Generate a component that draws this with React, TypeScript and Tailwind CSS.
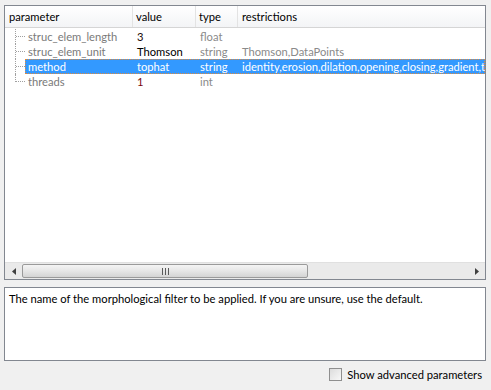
import React from 'react';

const rows = [
  { name: 'struc_elem_length', value: '3', type: 'float', restr: '', valueColor: 'text-[#1a0a0a]' },
  { name: 'struc_elem_unit', value: 'Thomson', type: 'string', restr: 'Thomson,DataPoints', valueColor: 'text-black' },
  { name: 'method', value: 'tophat', type: 'string', restr: 'identity,erosion,dilation,opening,closing,gradient,tophat,bothat', valueColor: 'text-white', selected: true },
  { name: 'threads', value: '1', type: 'int', restr: '', valueColor: 'text-[#7a0a0a]' },
];

export default function App() {
  return (
    <div
      className="flex flex-col w-[491px] h-[390px] bg-[#f0f0f0] pl-1 pr-[5px] pt-[5px] overflow-hidden text-[11.2px] leading-none"
      style={{ fontFamily: '"Segoe UI", Lato, sans-serif' }}
    >
      {/* Parameter tree */}
      <div className="flex flex-col h-[275px] border border-[#828790] bg-white">
        {/* Header */}
        <div className="flex h-[22px] bg-gradient-to-b from-white to-[#f3f4f6] border-b border-[#d5d5d5] text-black">
          <div className="w-[128px] pl-1 flex items-center border-r border-[#e3e3e3]">parameter</div>
          <div className="w-[63px] pl-[3px] flex items-center border-r border-[#e3e3e3]">value</div>
          <div className="w-[42px] pl-[3px] flex items-center border-r border-[#e3e3e3]">type</div>
          <div className="flex-1 pl-[4px] flex items-center">restrictions</div>
        </div>

        {/* Rows */}
        <div className="flex flex-col pt-px">
          {rows.map((r, i) => (
            <div key={r.name} className="flex h-[15px] items-stretch">
              {/* tree lines */}
              <div className="relative w-[20px] shrink-0">
                <div
                  className={`absolute left-[10px] top-0 border-l border-dotted border-[#a0a0a0] ${i === rows.length - 1 ? 'h-[8px]' : 'h-full'}`}
                />
                <div className="absolute left-[11px] top-[7px] w-[9px] border-t border-dotted border-[#a0a0a0]" />
              </div>
              <div
                className={`flex flex-1 min-w-0 items-center whitespace-nowrap overflow-hidden ${
                  r.selected ? 'bg-[#3399ff] outline outline-1 outline-dotted outline-[#e08a3c] -outline-offset-1' : ''
                }`}
              >
                <div className={`w-[112px] shrink-0 pl-[3px] ${r.selected ? 'text-white' : 'text-[#7a7a7a]'}`}>{r.name}</div>
                <div className={`w-[63px] shrink-0 ${r.valueColor}`}>{r.value}</div>
                <div className={`w-[42px] shrink-0 ${r.selected ? 'text-white' : 'text-[#8a8a8a]'}`}>{r.type}</div>
                <div className={`shrink-0 ${r.selected ? 'text-white' : 'text-[#8a8a8a]'}`}>{r.restr}</div>
              </div>
            </div>
          ))}
        </div>

        <div className="flex-1" />

        {/* Horizontal scrollbar */}
        <div className="flex h-[17px] bg-[#eaeaea] border-t border-[#e0e0e0]">
          <div className="w-[17px] flex items-center justify-center">
            <svg width="4" height="7" viewBox="0 0 4 7">
              <path d="M4 0 L0 3.5 L4 7 Z" fill="#404040" />
            </svg>
          </div>
          <div className="w-[286px] my-px rounded-[2px] border border-[#9a9a9a] bg-gradient-to-b from-[#f4f4f4] via-[#e6e6e6] to-[#d4d4d4] flex items-center justify-center gap-[2px]">
            <span className="w-px h-[7px] bg-[#5a5a5a]" />
            <span className="w-px h-[7px] bg-[#5a5a5a]" />
            <span className="w-px h-[7px] bg-[#5a5a5a]" />
          </div>
          <div className="flex-1" />
          <div className="w-[17px] flex items-center justify-center">
            <svg width="4" height="7" viewBox="0 0 4 7">
              <path d="M0 0 L4 3.5 L0 7 Z" fill="#404040" />
            </svg>
          </div>
        </div>
      </div>

      {/* Description */}
      <div className="mt-[7px] h-[74px] border border-[#828790] bg-white px-[4px] pt-[5px] text-black">
        The name of the morphological filter to be applied. If you are unsure, use the default.
      </div>

      {/* Footer */}
      <div className="flex flex-1 items-center justify-end pr-[4px] pb-[2px]">
        <label className="flex items-center gap-[5px] text-black">
          <span className="w-[13px] h-[13px] border border-[#8f8f8f] bg-gradient-to-br from-[#dcdcdc] to-[#f8f8f8]" />
          Show advanced parameters
        </label>
      </div>
    </div>
  );
}
